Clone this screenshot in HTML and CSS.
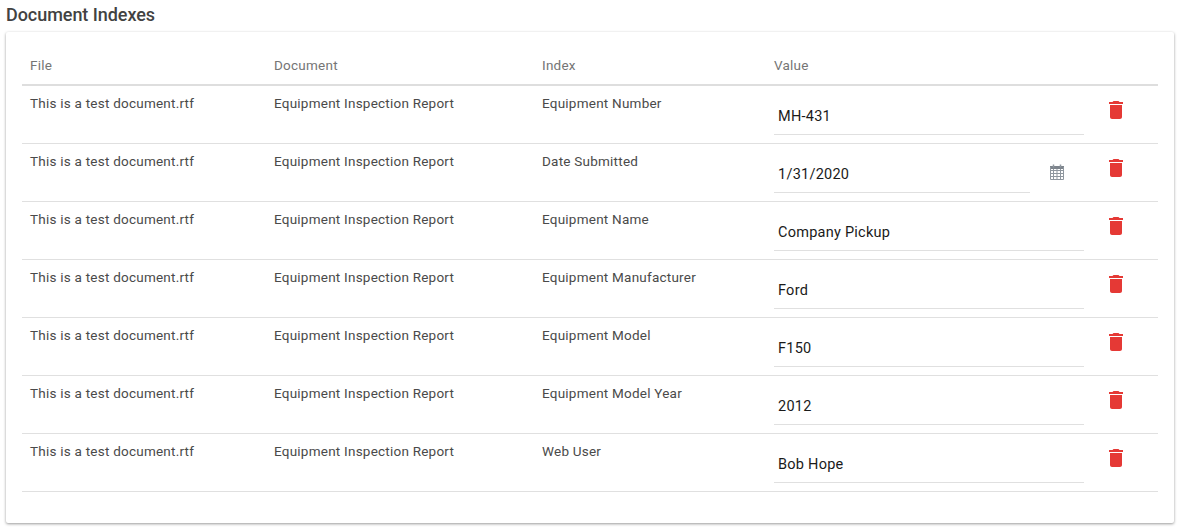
FILE: index.html

```html
<!DOCTYPE html>
<html lang="en">
<head>
    <meta charset="UTF-8">
    <title>Document Indexes</title>
    <link rel="stylesheet" href="styles.css">
</head>
<body>
    <h2 class="title">Document Indexes</h2>
    <div class="card">
        <table class="index-table">
            <thead>
                <tr>
                    <th class="col-file">File</th>
                    <th class="col-doc">Document</th>
                    <th class="col-index">Index</th>
                    <th class="col-value">Value</th>
                    <th></th>
                </tr>
            </thead>
            <tbody>
                <tr>
                    <td>This is a test document.rtf</td>
                    <td>Equipment Inspection Report</td>
                    <td>Equipment Number</td>
                    <td class="value"><div class="field">MH-431</div></td>
                    <td class="action"><svg class="trash" viewBox="0 0 24 24"><path d="M6 19c0 1.1.9 2 2 2h8c1.1 0 2-.9 2-2V7H6v12zM19 4h-3.5l-1-1h-5l-1 1H5v2h14V4z"/></svg></td>
                </tr>
                <tr>
                    <td>This is a test document.rtf</td>
                    <td>Equipment Inspection Report</td>
                    <td>Date Submitted</td>
                    <td class="value">
                        <div class="date-wrap">
                            <div class="field">1/31/2020</div>
                            <svg class="calendar" viewBox="0 0 16 16">
                                <path class="cal-top" d="M1 2h14v3H1z"/>
                                <path class="cal-grid" d="M1.5 3v12.500h13V3M1.500 6.500h13M1.500 9.500h13M1.500 12.500h13M4.500 5v10M8 5v10M11.500 5v10"/>
                                <path class="cal-ring" d="M4.500 .5v3M11.500 .5v3"/>
                            </svg>
                        </div>
                    </td>
                    <td class="action"><svg class="trash" viewBox="0 0 24 24"><path d="M6 19c0 1.1.9 2 2 2h8c1.1 0 2-.9 2-2V7H6v12zM19 4h-3.5l-1-1h-5l-1 1H5v2h14V4z"/></svg></td>
                </tr>
                <tr>
                    <td>This is a test document.rtf</td>
                    <td>Equipment Inspection Report</td>
                    <td>Equipment Name</td>
                    <td class="value"><div class="field">Company Pickup</div></td>
                    <td class="action"><svg class="trash" viewBox="0 0 24 24"><path d="M6 19c0 1.1.9 2 2 2h8c1.1 0 2-.9 2-2V7H6v12zM19 4h-3.5l-1-1h-5l-1 1H5v2h14V4z"/></svg></td>
                </tr>
                <tr>
                    <td>This is a test document.rtf</td>
                    <td>Equipment Inspection Report</td>
                    <td>Equipment Manufacturer</td>
                    <td class="value"><div class="field">Ford</div></td>
                    <td class="action"><svg class="trash" viewBox="0 0 24 24"><path d="M6 19c0 1.1.9 2 2 2h8c1.1 0 2-.9 2-2V7H6v12zM19 4h-3.5l-1-1h-5l-1 1H5v2h14V4z"/></svg></td>
                </tr>
                <tr>
                    <td>This is a test document.rtf</td>
                    <td>Equipment Inspection Report</td>
                    <td>Equipment Model</td>
                    <td class="value"><div class="field">F150</div></td>
                    <td class="action"><svg class="trash" viewBox="0 0 24 24"><path d="M6 19c0 1.1.9 2 2 2h8c1.1 0 2-.9 2-2V7H6v12zM19 4h-3.5l-1-1h-5l-1 1H5v2h14V4z"/></svg></td>
                </tr>
                <tr>
                    <td>This is a test document.rtf</td>
                    <td>Equipment Inspection Report</td>
                    <td>Equipment Model Year</td>
                    <td class="value"><div class="field">2012</div></td>
                    <td class="action"><svg class="trash" viewBox="0 0 24 24"><path d="M6 19c0 1.1.9 2 2 2h8c1.1 0 2-.9 2-2V7H6v12zM19 4h-3.5l-1-1h-5l-1 1H5v2h14V4z"/></svg></td>
                </tr>
                <tr>
                    <td>This is a test document.rtf</td>
                    <td>Equipment Inspection Report</td>
                    <td>Web User</td>
                    <td class="value"><div class="field">Bob Hope</div></td>
                    <td class="action"><svg class="trash" viewBox="0 0 24 24"><path d="M6 19c0 1.1.9 2 2 2h8c1.1 0 2-.9 2-2V7H6v12zM19 4h-3.5l-1-1h-5l-1 1H5v2h14V4z"/></svg></td>
                </tr>
            </tbody>
        </table>
    </div>
</body>
</html>
```

FILE: styles.css

```css
body {
    font-family: Roboto, Arial, sans-serif;
    margin: 0;
    padding: 0 8px 7px 6px;
    background-color: white;
    color: #4a4a4a;
}
.title {
    font-size: 18px;
    font-weight: 500;
    letter-spacing: -0.05px;
    line-height: 22px;
    height: 32px;
    margin: 0;
    padding-top: 4px;
    box-sizing: border-box;
    color: #424242;
}
.card {
    background-color: white;
    border-radius: 2px;
    padding: 16px 16px 31px;
    box-shadow: 0 1px 3px rgba(0, 0, 0, 0.4);
}
.index-table {
    width: 100%;
    table-layout: fixed;
    border-collapse: collapse;
    font-size: 13.5px;
    letter-spacing: 0.23px;
}
.col-file { width: 244px; }
.col-doc { width: 268px; }
.col-index { width: 232px; }
.col-value { width: 326px; }
th {
    height: 37px;
    box-sizing: border-box;
    padding: 0 8px 2px;
    text-align: left;
    font-weight: 400;
    color: #757575;
    border-bottom: 2px solid #dedede;
}
td {
    height: 58px;
    box-sizing: border-box;
    padding: 9px 8px 0;
    vertical-align: top;
    line-height: 16px;
    border-bottom: 1px solid #e0e0e0;
}
td.value {
    padding-top: 0;
}
.field {
    flex: 1;
    height: 49px;
    box-sizing: border-box;
    padding: 22px 4px 0;
    line-height: 18px;
    font-size: 14.5px;
    letter-spacing: 0.25px;
    color: #1a1a1a;
    border-bottom: 1px solid #e0e0e0;
}
.date-wrap {
    display: flex;
    align-items: flex-start;
}
.calendar {
    width: 16px;
    height: 16px;
    margin: 20px 19px 0 19px;
    flex: none;
}
.cal-top { fill: #7d848c; }
.cal-grid { fill: none; stroke: #8f979f; stroke-width: 1; }
.cal-ring { fill: none; stroke: #8f979f; stroke-width: 1.5; }
td.action {
    padding: 12px 0 0 12px;
}
.trash {
    display: block;
    width: 24px;
    height: 24px;
    fill: #e53935;
}
```
